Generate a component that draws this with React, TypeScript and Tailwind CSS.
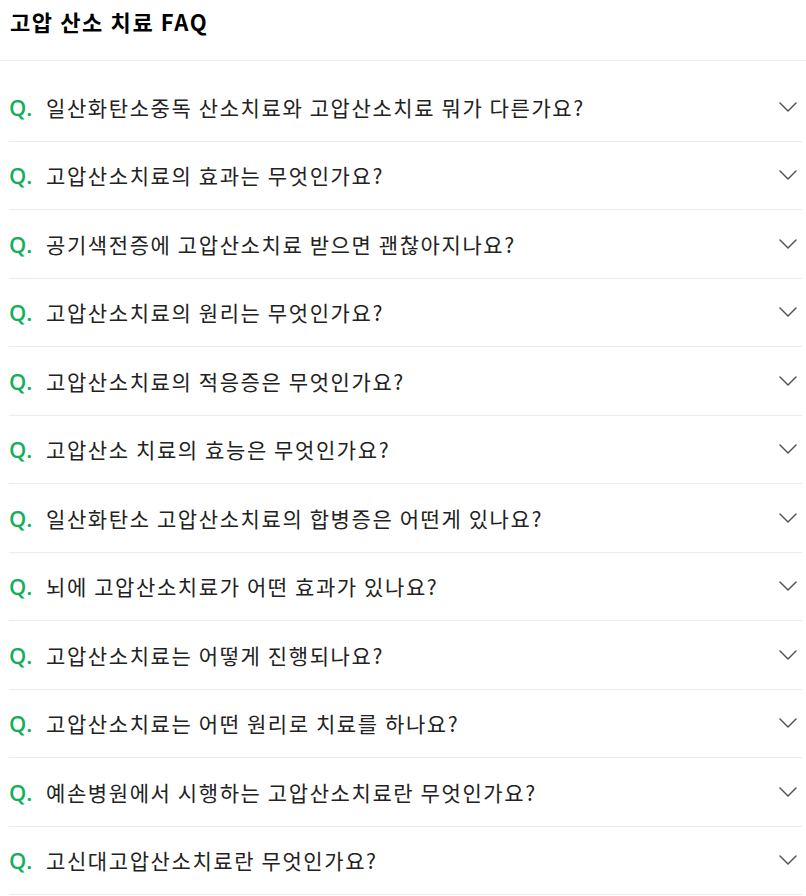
const faqs = [
  "일산화탄소중독 산소치료와 고압산소치료 뭐가 다른가요?",
  "고압산소치료의 효과는 무엇인가요?",
  "공기색전증에 고압산소치료 받으면 괜찮아지나요?",
  "고압산소치료의 원리는 무엇인가요?",
  "고압산소치료의 적응증은 무엇인가요?",
  "고압산소 치료의 효능은 무엇인가요?",
  "일산화탄소 고압산소치료의 합병증은 어떤게 있나요?",
  "뇌에 고압산소치료가 어떤 효과가 있나요?",
  "고압산소치료는 어떻게 진행되나요?",
  "고압산소치료는 어떤 원리로 치료를 하나요?",
  "예손병원에서 시행하는 고압산소치료란 무엇인가요?",
  "고신대고압산소치료란 무엇인가요?"
];

function Chevron() {
  return (
    <svg width="18" height="10" viewBox="0 0 18 10" fill="none" className="shrink-0">
      <path d="M1 1l8 8 8-8" stroke="#555" strokeWidth="1.5" strokeLinecap="round" strokeLinejoin="round" />
    </svg>
  );
}

export default function App() {
  return (
    <div className="min-h-[896px] bg-white font-['Noto_Sans_CJK_KR','Noto_Sans',sans-serif] text-[#222]">
      <h2 className="flex h-[60px] items-start pl-[10px] pt-[4px] text-[22px] font-bold leading-[34px] tracking-[1.6px] text-black">
        고압 산소 치료 FAQ
      </h2>
      <div className="border-t border-[#ebebeb] pt-[12px]">
        <ul className="ml-[9px] mr-[4px]">
          {faqs.map((q) => (
            <li
              key={q}
              className="flex h-[68.5px] items-center justify-between border-b border-[#ebebeb] pr-[5px]"
            >
              <div className="flex items-center">
                <span className="w-[37px] font-['Open_Sans',sans-serif] text-[22px] font-semibold leading-none text-[#14ae5c]">
                  Q.
                </span>
                <span className="text-[21px] leading-[30px] tracking-[1.6px]">{q}</span>
              </div>
              <Chevron />
            </li>
          ))}
        </ul>
      </div>
    </div>
  );
}
